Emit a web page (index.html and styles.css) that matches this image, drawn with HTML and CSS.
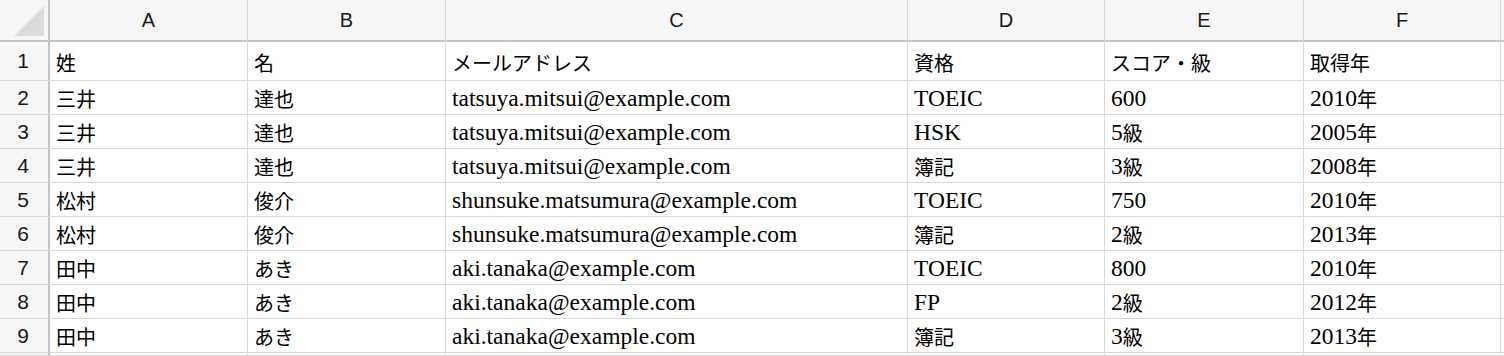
FILE: index.html
```html
<!DOCTYPE html>
<html lang="ja">
<head>
<meta charset="utf-8">
<title>Sheet</title>
<link rel="stylesheet" href="styles.css">
</head>
<body>
<div class="sheet">
  <div class="corner"><svg class="tri" width="50" height="42" viewBox="0 0 50 42"><polygon points="44,6 44,36 14,36" fill="#dcdcdc"/></svg></div>
  <div class="colhdr">A</div>
  <div class="colhdr">B</div>
  <div class="colhdr">C</div>
  <div class="colhdr">D</div>
  <div class="colhdr">E</div>
  <div class="colhdr">F</div>
  <div class="colhdr last"></div>

  <div class="rowhdr r1">1</div>
  <div class="cell r1">姓</div>
  <div class="cell r1">名</div>
  <div class="cell r1">メールアドレス</div>
  <div class="cell r1">資格</div>
  <div class="cell r1">スコア・級</div>
  <div class="cell r1">取得年</div>
  <div class="cell r1 last"></div>

  <div class="rowhdr">2</div>
  <div class="cell">三井</div>
  <div class="cell">達也</div>
  <div class="cell"><span class="lt">tatsuya.mitsui@example.com</span></div>
  <div class="cell"><span class="lt">TOEIC</span></div>
  <div class="cell"><span class="lt">600</span></div>
  <div class="cell"><span class="lt">2010</span>年</div>
  <div class="cell last"></div>

  <div class="rowhdr">3</div>
  <div class="cell">三井</div>
  <div class="cell">達也</div>
  <div class="cell"><span class="lt">tatsuya.mitsui@example.com</span></div>
  <div class="cell"><span class="lt">HSK</span></div>
  <div class="cell"><span class="lt">5</span>級</div>
  <div class="cell"><span class="lt">2005</span>年</div>
  <div class="cell last"></div>

  <div class="rowhdr">4</div>
  <div class="cell">三井</div>
  <div class="cell">達也</div>
  <div class="cell"><span class="lt">tatsuya.mitsui@example.com</span></div>
  <div class="cell">簿記</div>
  <div class="cell"><span class="lt">3</span>級</div>
  <div class="cell"><span class="lt">2008</span>年</div>
  <div class="cell last"></div>

  <div class="rowhdr">5</div>
  <div class="cell">松村</div>
  <div class="cell">俊介</div>
  <div class="cell"><span class="lt">shunsuke.matsumura@example.com</span></div>
  <div class="cell"><span class="lt">TOEIC</span></div>
  <div class="cell"><span class="lt">750</span></div>
  <div class="cell"><span class="lt">2010</span>年</div>
  <div class="cell last"></div>

  <div class="rowhdr">6</div>
  <div class="cell">松村</div>
  <div class="cell">俊介</div>
  <div class="cell"><span class="lt">shunsuke.matsumura@example.com</span></div>
  <div class="cell">簿記</div>
  <div class="cell"><span class="lt">2</span>級</div>
  <div class="cell"><span class="lt">2013</span>年</div>
  <div class="cell last"></div>

  <div class="rowhdr">7</div>
  <div class="cell">田中</div>
  <div class="cell">あき</div>
  <div class="cell"><span class="lt">aki.tanaka@example.com</span></div>
  <div class="cell"><span class="lt">TOEIC</span></div>
  <div class="cell"><span class="lt">800</span></div>
  <div class="cell"><span class="lt">2010</span>年</div>
  <div class="cell last"></div>

  <div class="rowhdr">8</div>
  <div class="cell">田中</div>
  <div class="cell">あき</div>
  <div class="cell"><span class="lt">aki.tanaka@example.com</span></div>
  <div class="cell"><span class="lt">FP</span></div>
  <div class="cell"><span class="lt">2</span>級</div>
  <div class="cell"><span class="lt">2012</span>年</div>
  <div class="cell last"></div>

  <div class="rowhdr">9</div>
  <div class="cell">田中</div>
  <div class="cell">あき</div>
  <div class="cell"><span class="lt">aki.tanaka@example.com</span></div>
  <div class="cell">簿記</div>
  <div class="cell"><span class="lt">3</span>級</div>
  <div class="cell"><span class="lt">2013</span>年</div>
  <div class="cell last"></div>

  <div class="rowhdr"></div>
  <div class="cell"></div>
  <div class="cell"></div>
  <div class="cell"></div>
  <div class="cell"></div>
  <div class="cell"></div>
  <div class="cell"></div>
  <div class="cell last"></div>
</div>
</body>
</html>
```

FILE: styles.css
```css
html, body {
  margin: 0;
  padding: 0;
  background: #ffffff;
}
body {
  width: 1504px;
  height: 356px;
  overflow: hidden;
}
.sheet {
  display: grid;
  grid-template-columns: 50px 198px 198px 462px 197px 199px 197px 1fr;
  grid-template-rows: 42px 39px repeat(8, 34px) 1fr;
  height: 356px;
  width: 1504px;
}
.sheet > div {
  box-sizing: border-box;
  border-right: 1px solid #d9d9d9;
  border-bottom: 1px solid #d9d9d9;
  overflow: hidden;
  white-space: nowrap;
}
.corner {
  background: #f6f6f6;
  border-right: 2px solid #c4c4c4 !important;
  border-bottom: 2px solid #c4c4c4 !important;
  position: relative;
}
.tri {
  position: absolute;
  left: 0;
  top: 0;
}
.colhdr {
  background: #f6f6f6;
  border-bottom: 2px solid #c4c4c4 !important;
  display: flex;
  align-items: center;
  justify-content: center;
  font-family: "Liberation Sans", Arial, sans-serif;
  font-size: 20px;
  color: #1a1a1a;
}
.rowhdr {
  background: #f6f6f6;
  border-right: 2px solid #c4c4c4 !important;
  display: flex;
  align-items: center;
  justify-content: center;
  font-family: "Liberation Sans", Arial, sans-serif;
  font-size: 21px;
  color: #1a1a1a;
  padding-right: 2px;
}
.cell {
  display: flex;
  align-items: center;
  padding-left: 6px;
  padding-top: 2px;
  font-family: "Noto Sans CJK JP", sans-serif;
  font-size: 20px;
  color: #000;
}
.lt {
  font-family: "Liberation Serif", "Times New Roman", serif;
  font-size: 23.5px;
}
.last {
  border-right: none !important;
}
```
